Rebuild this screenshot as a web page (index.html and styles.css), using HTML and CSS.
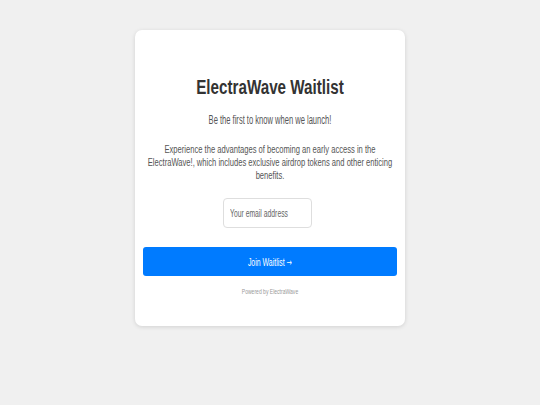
FILE: index.html
```html
<!DOCTYPE html>
<html>
<head>
<meta charset="utf-8">
<link rel="stylesheet" href="styles.css">
</head>
<body>
<div class="page">
  <div class="card">
    <h1 class="title">ElectraWave Waitlist</h1>
    <p class="subtitle">Be the first to know when we launch!</p>
    <p class="desc">Experience the advantages of becoming an early access in the ElectraWave!, which includes exclusive airdrop tokens and other enticing benefits.</p>
    <div class="email" role="textbox" aria-label="Your email address"><span class="placeholder">Your email address</span></div>
    <button class="join"><span class="join-label">Join Waitlist <span class="arrow">→</span></span></button>
    <p class="powered">Powered by ElectraWave</p>
  </div>
</div>
</body>
</html>
```
FILE: styles.css
```css
html, body {
  margin: 0;
  padding: 0;
  background: #f0f0f0;
  font-family: "Liberation Sans", Arial, sans-serif;
}
.page {
  width: 540px;
  height: 405px;
  display: flex;
  justify-content: center;
  padding-top: 30px;
  box-sizing: border-box;
}
.card {
  width: 270px;
  height: 296px;
  box-sizing: border-box;
  background: #fff;
  border-radius: 7px;
  box-shadow: 0 1px 4px rgba(0,0,0,0.13);
  padding: 45px 8px 0;
  display: flex;
  flex-direction: column;
  align-items: center;
  text-align: center;
}
.title {
  margin: 0;
  width: 254px;
  font-size: 20px;
  font-weight: bold;
  color: #333;
  line-height: 24px;
  white-space: nowrap;
  transform: scaleX(0.76);
}
.subtitle {
  margin: 14px 0 0;
  width: 254px;
  font-size: 12.5px;
  line-height: 14px;
  color: #555;
  white-space: nowrap;
  transform: scaleX(0.605);
}
.desc {
  margin: 16px 0 0;
  width: 370px;
  flex-shrink: 0;
  font-size: 11px;
  line-height: 13px;
  color: #555;
  transform: scaleX(0.69);
}
.email {
  margin: 16px 5px 0 0;
  width: 89px;
  height: 30px;
  box-sizing: border-box;
  border: 1px solid #dedede;
  border-radius: 4px;
  padding: 0 6px;
  display: flex;
  align-items: center;
  overflow: hidden;
}
.placeholder {
  display: inline-block;
  font-size: 10px;
  color: #666;
  white-space: nowrap;
  transform: scaleX(0.68);
  transform-origin: left center;
}
.join {
  margin-top: 19px;
  width: 254px;
  height: 29px;
  padding: 0;
  background: #007bff;
  color: #fff;
  border: none;
  border-radius: 3px;
  font-family: inherit;
}
.join-label {
  display: inline-block;
  font-size: 11px;
  white-space: nowrap;
  transform: scaleX(0.63);
}
.arrow {
  font-family: "DejaVu Sans", sans-serif;
  font-size: 10px;
}
.powered {
  margin: 12px 0 0;
  width: 254px;
  font-size: 7px;
  line-height: 8px;
  color: #999;
  white-space: nowrap;
  transform: scaleX(0.72);
}
```
